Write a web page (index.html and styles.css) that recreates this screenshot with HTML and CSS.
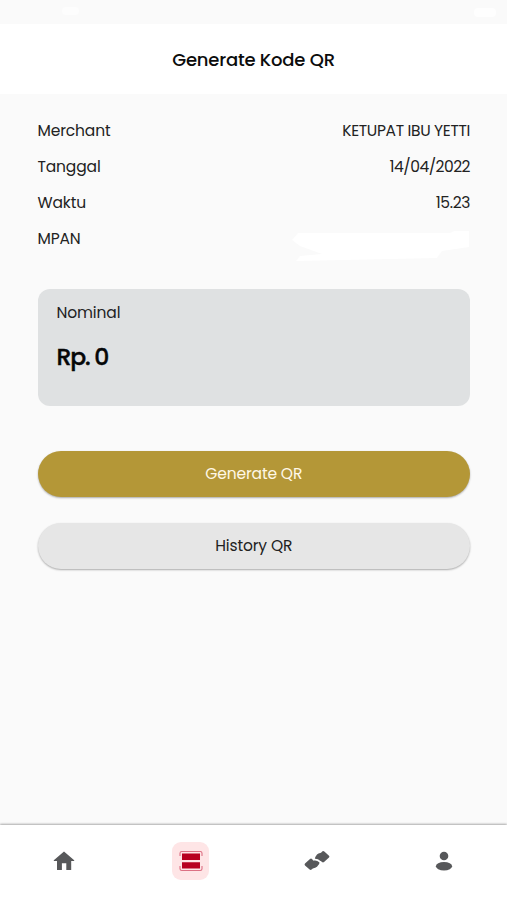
FILE: index.html
```html
<!DOCTYPE html>
<html lang="id">
<head>
<meta charset="utf-8">
<title>Generate Kode QR</title>
<link rel="stylesheet" href="styles.css">
</head>
<body>
<div class="app">
  <div class="statusbar"><i class="status-left"></i><i class="status-right"></i></div>
  <header class="header"><h1 class="title">Generate Kode QR</h1></header>
  <main class="content">
    <dl class="details">
      <div class="row"><dt>Merchant</dt><dd>KETUPAT IBU YETTI</dd></div>
      <div class="row"><dt>Tanggal</dt><dd class="date">14/04/2022</dd></div>
      <div class="row"><dt>Waktu</dt><dd>15.23</dd></div>
      <div class="row"><dt>MPAN</dt><dd class="redacted">
        <svg width="178" height="34" viewBox="0 0 178 34"><path d="M0 12L6 5L158 5L162 3L177 3L177 19L150 23L145 30L4 33L8 28L30 26L8 18Z" fill="#fff"/></svg>
      </dd></div>
    </dl>
    <section class="amount">
      <div class="amount-label">Nominal</div>
      <div class="amount-value">Rp. 0</div>
    </section>
    <button class="btn primary"><span>Generate QR</span></button>
    <button class="btn secondary"><span>History QR</span></button>
  </main>
  <nav class="nav">
    <a class="tab"><svg width="24" height="24" viewBox="0 0 24 24"><path d="M12 2.6L22.2 11.3V12H19.2V21H14.3V14.2H9.9V21H5V12H1.8V11.3Z" fill="#57585a"/></svg></a>
    <a class="tab"><span class="active"><svg width="24" height="22" viewBox="0 0 24 22"><path d="M1 6V3.2Q1 1.5 2.7 1.5H21.3Q23 1.5 23 3.2V6M1 16V18.8Q1 20.5 2.7 20.5H21.3Q23 20.5 23 18.8V16" fill="none" stroke="#dc7184" stroke-width="1.1"/><path d="M3 3.5H21V10H3ZM3 12.2H21V18.6H3Z" fill="#b80020"/></svg></span></a>
    <a class="tab"><svg width="28" height="24" viewBox="0 0 28 24"><path d="M18 3.8L19.5 2.2Q20.4 1.7 21.3 2.4L26 6.8Q26.9 7.7 26 8.6L21 13Q20 13.8 19 13L17.8 12H11.3Q11.6 8 14 5.6Q15 4.4 18 3.8Z" fill="#57585a"/><path d="M9.8 19.5L8.6 20.6Q7.6 21.3 6.6 20.6L2 16.4Q1.1 15.5 2 14.6L7 10Q8 9.2 9 10L10.5 11.6H17Q16.8 15.6 14 17.8Q12.5 18.9 9.8 19.5Z" fill="#57585a"/><path d="M9.8 10.5Q14.5 10 17.6 13.2" fill="none" stroke="#fff" stroke-width="1.7"/></svg></a>
    <a class="tab"><svg width="24" height="24" viewBox="0 0 24 24"><circle cx="12" cy="7" r="4.3" fill="#57585a"/><ellipse cx="12" cy="17.2" rx="8.1" ry="4.2" fill="#57585a"/></svg></a>
  </nav>
</div>
</body>
</html>
```
FILE: styles.css
```css
* { box-sizing: border-box; }
body { margin: 0; background: #fafafa; color: #222; font-family: Poppins, Inter, "Open Sans", sans-serif; font-size: 15.5px; letter-spacing: -.14px; }
.app { height: 900px; display: flex; flex-direction: column; overflow: hidden; }
.statusbar { height: 24px; flex: none; display: flex; justify-content: space-between; padding: 7px 11px 0 62px; }
.status-left { width: 17px; height: 8px; border-radius: 4px; background: #fdfdfd; }
.status-right { width: 22px; height: 9px; margin-top: 1px; border-radius: 4px; background: #fefefe; }
.header { height: 70px; flex: none; display: flex; align-items: center; justify-content: center; padding-top: 2px; background: #fff; }
.title { margin: 0; font-size: 18px; line-height: 24px; font-weight: 500; letter-spacing: -.2px; color: #0c0c0c; }
.content { flex: 1; padding: 18px 37px 0 37.5px; }
.details { margin: 0; }
.row { height: 36px; display: flex; align-items: center; justify-content: space-between; white-space: nowrap; }
.row dd { margin: 0; letter-spacing: -.34px; }
.row .date { letter-spacing: -.5px; }
.redacted { height: 34px; margin-top: 13px; }
.redacted svg { display: block; margin-top: 7px; }
.amount { height: 117.5px; margin-top: 32.5px; padding: 12px 19px; border-radius: 12px; background: #dfe1e2; }
.amount-label { line-height: 24px; }
.amount-value { margin-top: 16px; font-size: 23.5px; line-height: 32px; font-weight: 500; letter-spacing: -1.2px; -webkit-text-stroke: .4px #060708; color: #060708; }
.btn { display: flex; align-items: center; justify-content: center; width: 100%; height: 46px; border: 0; border-radius: 23px; padding: 0; font: inherit; letter-spacing: -.14px; box-shadow: 0 1px 2px rgba(0, 0, 0, .32); }
.primary { margin-top: 44.5px; background: #b49737; color: #fff8e6; }
.secondary { margin-top: 26px; padding-bottom: 1px; background: #e6e6e6; color: #222; }
.nav { height: 75px; flex: none; display: grid; grid-template-columns: repeat(4, 126.6px); padding: 0 0 3px 1px; background: #fff; box-shadow: 0 -1px 2px rgba(0, 0, 0, .32); }
.tab { display: flex; align-items: center; justify-content: center; }
.active { display: flex; align-items: center; justify-content: center; width: 37px; height: 38px; border-radius: 9px; background: #fee5e6; }
```
